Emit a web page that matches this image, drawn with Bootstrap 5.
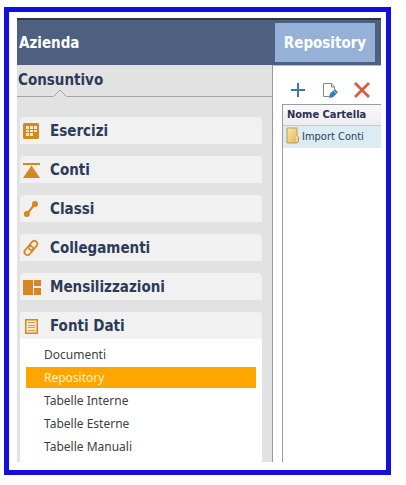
<!DOCTYPE html>
<html lang="it">
<head>
<meta charset="utf-8">
<meta name="viewport" content="width=device-width, initial-scale=1">
<title>Repository</title>
<link href="https://cdn.jsdelivr.net/npm/bootstrap@5.3.0/dist/css/bootstrap.min.css" rel="stylesheet">
<style>
body{font-family:"DejaVu Sans Condensed","Noto Sans",sans-serif;color:#2c3b59;background:#fff;padding:7px 15px 10px 4px;font-size:12px;line-height:16px}
.frame{border:5px solid #120fe0;padding:6px 5px 8px 8px;min-height:calc(100vh - 17px)}
.topbar{background:#4e607f;border-top:2px solid #2b3950;height:47px;padding:3px 6px 3px 2px;font-size:15px;color:#fff}
.tab-main{background:#95b1d7;color:#fff;font-size:15px;font-weight:700;width:100px;border:0;padding:0}
.side{width:256px;background:#e2e2e2;border-right:1px solid #999}
.section-title{height:32px;border-bottom:1px solid #a5a5a5;font-size:15px;line-height:20px;padding:5px 1px 0;position:relative}
.notch{position:absolute;left:36px;bottom:-1px}
.menu{padding:20px 10px 0 3px}
.entries{gap:12px}
.entry{height:27px;background:#f1f1f1;border:0;border-radius:4px 4px 0 0;color:#2c3b59;font-size:15px;font-weight:700;padding:0 3px;gap:9px}
.entry svg{width:18px;height:18px;flex:none}
.sub{background:#fff;padding:5px 6px 0;gap:2px;font-family:"Noto Sans",sans-serif}
.sub a{display:block;height:21px;line-height:21px;padding-left:18px;color:#404040;text-decoration:none}
.sub a.current{background:#ffa500;color:#fff3cf}
.pane{border-top:1px solid #bbb;padding:15px 0 0 9px}
.tools{height:23px;gap:14px;padding-left:7px}
.tools button{border:0;background:none;padding:0;width:18px;height:18px;line-height:0}
.grid-box{border-left:1px solid #999ca3;border-top:1px solid #999ca3}
.grid-box th{background:linear-gradient(#f8f8f9,#eeeef1);border-bottom:1px solid #c8c8d0;height:20px;padding:0 4px;font-size:11px;color:#2c3050;line-height:18px}
.grid-box td{background:#dbecf2;height:23px;padding:0 3px;font-size:11px;color:#2c3b59}
.cell{gap:3px}
.cell svg{margin-bottom:3px}
</style>
<script src="https://cdn.jsdelivr.net/npm/bootstrap@5.3.0/dist/js/bootstrap.bundle.min.js"></script>
</head>
<body>
<div class="frame d-flex flex-column">
  <header class="topbar d-flex justify-content-between align-items-stretch">
    <span class="fw-bold align-self-center">Azienda</span>
    <button class="tab-main" type="button">Repository</button>
  </header>
  <div class="d-flex flex-grow-1">
    <nav class="side flex-shrink-0 d-flex flex-column">
      <div class="section-title fw-bold">Consuntivo
        <svg class="notch" width="14" height="8" viewBox="0 0 14 8"><path d="M0 8L7 1l7 7z" fill="#e2e2e2"/><path d="M0.5 7.5L7 1l6.5 6.5" fill="none" stroke="#a0a0a0"/></svg>
      </div>
      <div class="menu d-flex flex-column flex-grow-1">
        <div class="entries d-flex flex-column">
          <button class="entry d-flex align-items-center" type="button"><svg viewBox="0 0 18 18"><rect y="1" width="16" height="16" rx="1.5" fill="#d8861f"/><path fill="#fbe9cf" d="M3 4h3v3H3zM7 4h3v3H7zM11 4h3v3h-3zM3 8h3v2H3zM7 8h3v2H7zM11 8h3v2h-3zM3 11h3v3H3zM7 11h3v3H7z"/></svg>Esercizi</button>
          <button class="entry d-flex align-items-center" type="button"><svg viewBox="0 0 18 18"><path fill="#d8861f" d="M0 2h17v2H0zM8.500 4.500L17 17H0z"/></svg>Conti</button>
          <button class="entry d-flex align-items-center" type="button"><svg viewBox="0 0 18 18" fill="#d8861f"><path d="M3.500 14.500L12 4" stroke="#d8861f" stroke-width="2"/><circle cx="12" cy="4" r="3"/><circle cx="3.800" cy="14" r="3"/></svg>Classi</button>
          <button class="entry d-flex align-items-center" type="button"><svg viewBox="0 0 18 18" fill="none" stroke="#d8861f" stroke-width="1.800"><rect x="5" y="3.500" width="10" height="6" rx="3" transform="rotate(-50 10 6.500)"/><rect x="0.800" y="8.500" width="10" height="6" rx="3" transform="rotate(-50 5.800 11.500)"/></svg>Collegamenti</button>
          <button class="entry d-flex align-items-center" type="button"><svg viewBox="0 0 18 18"><path fill="#d8861f" d="M0 2h10v15H0zM11 2h7v6h-7zM11 10h7v7h-7z"/></svg>Mensilizzazioni</button>
          <button class="entry d-flex align-items-center" type="button" aria-expanded="true" aria-controls="links"><svg viewBox="0 0 18 18"><path fill="#fbe9cf" stroke="#d8861f" stroke-width="1.500" d="M2.750 2.750h11.500v13.500H2.750z"/><path stroke="#d8861f" stroke-opacity=".8" d="M5 5.500h7M5 8.500h7M5 10.500h7M5 13.500h7"/></svg>Fonti Dati</button>
        </div>
        <div class="sub flex-grow-1 d-flex flex-column" id="links">
          <a href="#">Documenti</a>
          <a href="#" class="current" aria-current="page">Repository</a>
          <a href="#">Tabelle Interne</a>
          <a href="#">Tabelle Esterne</a>
          <a href="#">Tabelle Manuali</a>
        </div>
      </div>
    </nav>
    <main class="pane flex-grow-1 d-flex flex-column">
      <div class="tools d-flex">
        <button type="button" aria-label="Aggiungi"><svg width="18" height="18" viewBox="0 0 18 18"><path d="M9 2v14M2 9h14" stroke="#3c76ae" stroke-width="2"/></svg></button>
        <button type="button" aria-label="Modifica"><svg width="18" height="18" viewBox="0 0 18 18"><path d="M8 15.500H2.500v-13h8l3 3.500v2M10.500 2.500V6h3" fill="none" stroke="#858990"/><path d="M8 17l.8-4 5-5 3.200 3.200-5 5z" fill="#3c7ab8"/><path d="M12.500 9.500l3.200 3.200" stroke="#fff" stroke-width=".6"/></svg></button>
        <button type="button" aria-label="Elimina"><svg width="18" height="18" viewBox="0 0 18 18"><path d="M2 2l14 14M16 2L2 16" stroke="#d45e3e" stroke-width="2.800"/></svg></button>
      </div>
      <div class="grid-box flex-grow-1">
        <table class="w-100">
          <thead><tr><th scope="col" class="text-nowrap">Nome Cartella</th></tr></thead>
          <tbody><tr><td><div class="cell d-flex align-items-center text-nowrap"><svg width="13" height="17" viewBox="0 0 13 17"><defs><linearGradient id="g" x2="1" y2="1"><stop stop-color="#fae9a8"/><stop offset="1" stop-color="#dfb456"/></linearGradient></defs><path d="M1 1h10v8l1.500 1v5L11 16H1z" fill="url(#g)" stroke="#c19c4c"/><path d="M11 9v6" stroke="#f9edbd"/></svg>Import Conti</div></td></tr></tbody>
        </table>
      </div>
    </main>
  </div>
</div>
</body>
</html>
